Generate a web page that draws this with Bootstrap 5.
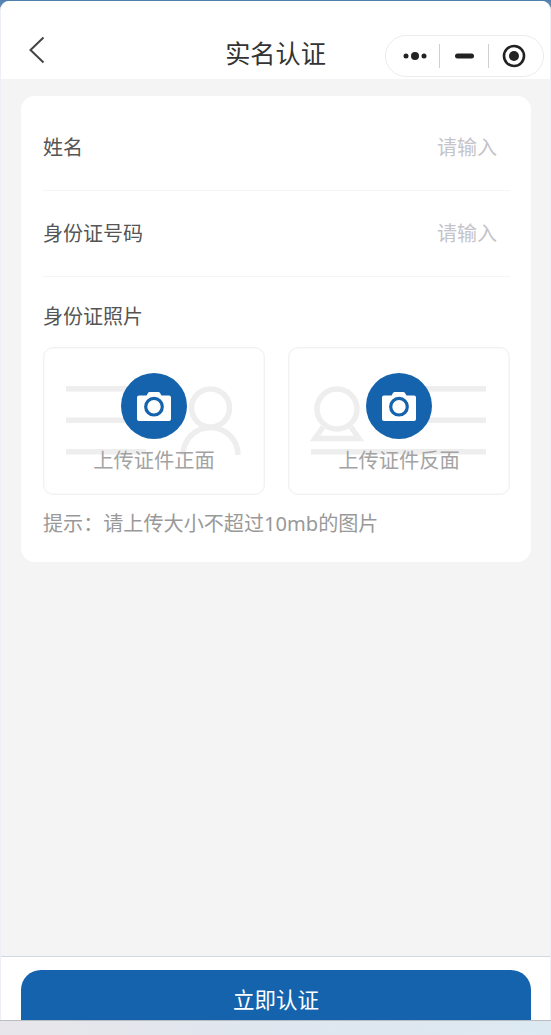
<!DOCTYPE html>
<html lang="zh">
<head>
<meta charset="utf-8">
<title>实名认证</title>
<link href="https://cdn.jsdelivr.net/npm/bootstrap@5.3.0/dist/css/bootstrap.min.css" rel="stylesheet">
<style>
html,body{height:1035px;overflow:hidden;}
body{background:linear-gradient(90deg,#e8e6ea 0,#dfe6ef 50%,#dde9f2 100%);font-family:"Liberation Sans","Noto Sans CJK SC",sans-serif;}
.shell{width:551px;height:1021px;border-top:1px solid #4f7fae;border-bottom:1px solid #b8bdc4;background:#5a86b3;}
.frame{height:100%;background:#f4f4f4;border-radius:9px 9px 0 0;overflow:hidden;border-left:1px solid #eceff3;border-right:1px solid #eceff3;}
.topbar{height:78px;background:#fff;}
.back-btn{width:75px;height:100%;padding:35px 0 0 27px;}
.page-title{font-size:25.200px;line-height:30px;color:#333;margin-top:38px;left:0;right:0;text-align:center;}
.capsule{width:159px;height:42px;margin-top:34px;margin-right:6px;border:1px solid #ebebeb;border-radius:21px;background:#fff;}
.cap-cell{height:100%;}
.cap-a{width:53px;padding-left:6px;}
.cap-b{width:49px;}
.cap-c{width:54px;padding-right:4px;}
.cap-sep{width:1px;height:24px;background:#d0d0d0;}
.panel{margin:17px 19px 0 20px;height:466px;background:#fff;border-radius:14px;padding:0 21px 0 22px;}
.form-line{height:86px;border-bottom:1px solid #f5f5f5;font-size:20px;color:#555;}
.form-line:first-child{height:95px;padding-top:10px;}
.ph{color:#c4c4ca;padding-right:13px;}
.sec-label{font-size:20px;line-height:28px;color:#555;margin-top:26px;}
.uploads{margin-top:16px;}
.uploader{width:222px;height:148px;border:1px solid #f1f1f1;box-shadow:inset 0 0 0 1px #fafafa;border-radius:10px;position:relative;overflow:hidden;}
.upl-art{position:absolute;left:1px;top:1px;}
.cam{position:absolute;left:77px;top:25px;width:66px;height:66px;border-radius:50%;background:#1563ac;}
.upl-text{position:absolute;left:0;right:0;top:99px;font-size:20.3px;line-height:28px;color:#a3a3a3;text-align:center;}
.tip{font-family:"Noto Sans","Noto Sans CJK SC",sans-serif;font-size:20.1px;line-height:28px;color:#999;margin-top:15px;}
.footer-bar{position:relative;height:64px;margin-top:394px;background:#fff;border-top:1px solid #cfd9e4;padding:13px 19px 0 20px;overflow:hidden;}
.submit{display:block;width:100%;height:70px;border:0;border-radius:20px;background:#1563ac;color:#fff;font-size:21.500px;line-height:30px;padding:0 0 8px;}
</style>
</head>
<body>
<div class="shell">
<div class="frame">
  <header class="topbar d-flex justify-content-between position-relative">
    <div class="back-btn">
      <svg width="18" height="28" viewBox="0 0 18 28"><path d="M15.500 1.500 2.500 14l13 12.500" fill="none" stroke="#444" stroke-width="2"/></svg>
    </div>
    <div class="page-title position-absolute">实名认证</div>
    <div class="capsule d-flex align-items-center position-relative">
      <div class="cap-cell cap-a d-flex align-items-center justify-content-center">
        <svg width="24" height="12" viewBox="0 0 24 12"><circle cx="3" cy="6" r="2.500" fill="#222"/><circle cx="12" cy="6" r="4" fill="#222"/><circle cx="21" cy="6" r="2.500" fill="#222"/></svg>
      </div>
      <div class="cap-sep"></div>
      <div class="cap-cell cap-b d-flex align-items-center justify-content-center">
        <svg width="19" height="6" viewBox="0 0 19 6"><rect y=".5" width="19" height="5" rx="2.500" fill="#222"/></svg>
      </div>
      <div class="cap-sep"></div>
      <div class="cap-cell cap-c d-flex align-items-center justify-content-center">
        <svg width="24" height="24" viewBox="0 0 24 24"><circle cx="12" cy="12" r="10" fill="none" stroke="#222" stroke-width="2.600"/><circle cx="12" cy="12" r="5" fill="#222"/></svg>
      </div>
    </div>
  </header>
  <main class="panel">
    <div class="form-line d-flex justify-content-between align-items-center"><span>姓名</span><span class="ph">请输入</span></div>
    <div class="form-line d-flex justify-content-between align-items-center"><span>身份证号码</span><span class="ph">请输入</span></div>
    <div class="sec-label">身份证照片</div>
    <div class="uploads d-flex justify-content-between">
      <div class="uploader">
        <svg class="upl-art" width="218" height="144" viewBox="0 0 218 144">
          <g fill="#eeeeee"><rect x="21" y="37" width="90" height="5.500"/><rect x="21" y="68.500" width="90" height="5.500"/><rect x="21" y="100" width="80" height="5.500"/></g>
          <g fill="none" stroke="#eeeeee" stroke-width="5.500"><circle cx="165.500" cy="59" r="19"/><path d="M138 106a27.500 27.500 0 0 1 55 0"/></g>
        </svg>
        <div class="cam"><svg width="66" height="66" viewBox="0 0 66 66"><path fill="#fff" d="M18 22.500h7.500l1.500-2.500a2 2 0 0 1 1.700-1h8.600a2 2 0 0 1 1.700 1l1.500 2.500H48a2 2 0 0 1 2 2V46a2 2 0 0 1-2 2H18a2 2 0 0 1-2-2V24.500a2 2 0 0 1 2-2z"/><circle cx="33" cy="33.700" r="8.300" fill="#fff" stroke="#1563ac" stroke-width="3.200"/></svg></div>
        <div class="upl-text">上传证件正面</div>
      </div>
      <div class="uploader">
        <svg class="upl-art" width="218" height="144" viewBox="0 0 218 144">
          <g fill="#eeeeee"><rect x="110" y="37" width="86" height="5.500"/><rect x="110" y="68.500" width="86" height="5.500"/><rect x="21" y="100" width="175" height="5.500"/></g>
          <g fill="none" stroke="#eeeeee" stroke-width="5.500"><circle cx="47" cy="60" r="20"/><path d="M33 78 25 89.500h44L61 78"/></g>
        </svg>
        <div class="cam"><svg width="66" height="66" viewBox="0 0 66 66"><path fill="#fff" d="M18 22.500h7.500l1.500-2.500a2 2 0 0 1 1.700-1h8.600a2 2 0 0 1 1.700 1l1.500 2.500H48a2 2 0 0 1 2 2V46a2 2 0 0 1-2 2H18a2 2 0 0 1-2-2V24.500a2 2 0 0 1 2-2z"/><circle cx="33" cy="33.700" r="8.300" fill="#fff" stroke="#1563ac" stroke-width="3.200"/></svg></div>
        <div class="upl-text">上传证件反面</div>
      </div>
    </div>
    <div class="tip">提示：请上传大小不超过10mb的图片</div>
  </main>
  <footer class="footer-bar">
    <button type="button" class="submit">立即认证</button>
  </footer>
</div>
</div>
</body>
</html>
